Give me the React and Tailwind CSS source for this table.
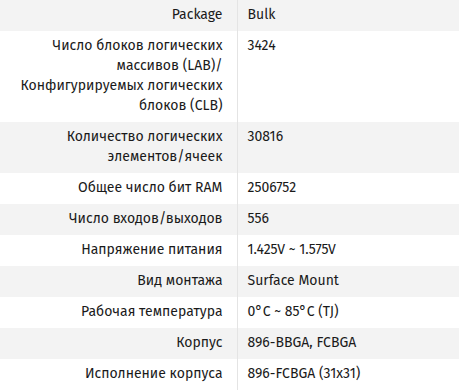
const rows = [
  { label: ['Package'], value: 'Bulk' },
  {
    label: [
      'Число блоков логических',
      'массивов (LAB)/',
      'Конфигурируемых логических',
      'блоков (CLB)',
    ],
    value: '3424',
  },
  { label: ['Количество логических', 'элементов/ячеек'], value: '30816' },
  { label: ['Общее число бит RAM'], value: '2506752' },
  { label: ['Число входов/выходов'], value: '556' },
  { label: ['Напряжение питания'], value: '1.425V ~ 1.575V' },
  { label: ['Вид монтажа'], value: 'Surface Mount' },
  { label: ['Рабочая температура'], value: '0°C ~ 85°C (TJ)' },
  { label: ['Корпус'], value: '896-BBGA, FCBGA' },
  { label: ['Исполнение корпуса'], value: '896-FCBGA (31x31)' },
];

export default function App() {
  return (
    <div className="w-[459px] h-[390px] bg-white text-[#1a1a1a] text-[14px] leading-[20px] font-['Fira_Sans','Open_Sans',sans-serif]">
      <table className="w-full border-collapse">
        <tbody>
          {rows.map((row, i) => (
            <tr key={i} className={i % 2 === 0 ? 'bg-[#f3f3f3]' : 'bg-white'}>
              <td className="w-[237px] border-r border-[#e4e4e4] pt-[5px] pb-[6px] pr-[14px] pl-[8px] text-right align-top">
                {row.label.map((line, j) => (
                  <div key={j} className="whitespace-nowrap">
                    {line}
                  </div>
                ))}
              </td>
              <td className="pt-[5px] pb-[6px] pl-[10px] pr-[8px] align-top">{row.value}</td>
            </tr>
          ))}
        </tbody>
      </table>
    </div>
  );
}
